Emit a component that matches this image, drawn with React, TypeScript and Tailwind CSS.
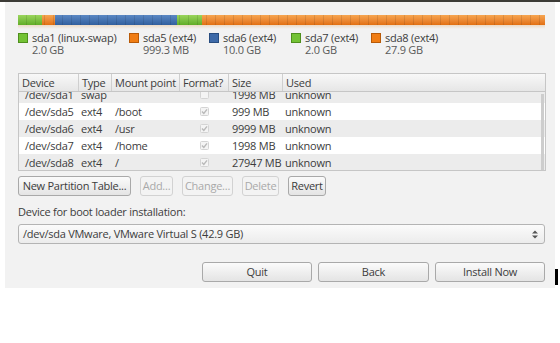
const font = { fontFamily: '"Open Sans", "Noto Sans", sans-serif' };

const segments = [
  { w: "w-[24px]", cls: "bg-linear-to-b from-[#9ad55c] to-[#62ad27]" },
  { w: "w-[13px]", cls: "bg-linear-to-b from-[#f6a550] to-[#e2700f]" },
  { w: "w-[122px]", cls: "bg-linear-to-b from-[#5b88c4] to-[#33609e]" },
  { w: "w-[25px]", cls: "bg-linear-to-b from-[#9ad55c] to-[#62ad27]" },
  { w: "flex-1", cls: "bg-linear-to-b from-[#f6a550] to-[#e2700f]" },
];

const legend = [
  { name: "sda1 (linux-swap)", size: "2.0 GB", w: "w-[111px]", sq: "bg-[#73c234] border-[#4f8f1d]" },
  { name: "sda5 (ext4)", size: "999.3 MB", w: "w-[80px]", sq: "bg-[#f07d14] border-[#b85a08]" },
  { name: "sda6 (ext4)", size: "10.0 GB", w: "w-[82px]", sq: "bg-[#3e6aa8] border-[#284d80]" },
  { name: "sda7 (ext4)", size: "2.0 GB", w: "w-[80px]", sq: "bg-[#73c234] border-[#4f8f1d]" },
  { name: "sda8 (ext4)", size: "27.9 GB", w: "w-[100px]", sq: "bg-[#f07d14] border-[#b85a08]" },
];

const rows = [
  { dev: "/dev/sda1", type: "swap", mount: "", fmt: false, size: "1998 MB" },
  { dev: "/dev/sda5", type: "ext4", mount: "/boot", fmt: true, size: "999 MB" },
  { dev: "/dev/sda6", type: "ext4", mount: "/usr", fmt: true, size: "9999 MB" },
  { dev: "/dev/sda7", type: "ext4", mount: "/home", fmt: true, size: "1998 MB" },
  { dev: "/dev/sda8", type: "ext4", mount: "/", fmt: true, size: "27947 MB" },
];

const cols = "grid grid-cols-[60px_33px_68px_49px_54px_1fr]";

const Check = ({ on }: { on: boolean }) => (
  <svg width="9" height="9" viewBox="0 0 9 9">
    <rect x="0.5" y="0.5" width="8" height="8" rx="1" fill="#f4f4f4" stroke="#d4d4d4" />
    {on && <path d="M2 4.6 L3.8 6.4 L7 2.4" fill="none" stroke="#b9b9b9" strokeWidth="1.4" />}
  </svg>
);

const Btn = ({ label, w, off }: { label: string; w: string; off?: boolean }) => (
  <div
    className={`${w} h-[20px] flex items-center justify-center whitespace-nowrap rounded-[3px] border text-[11px] ${
      off
        ? "border-[#d2d2d2] bg-[#f3f3f3] text-[#a9a9a9]"
        : "border-[#a9a9a9] bg-linear-to-b from-[#fbfbfb] to-[#e4e4e4] text-[#3c3c3c]"
    }`}
  >
    {label}
  </div>
);

export default function App() {
  return (
    <div className="relative w-[560px] h-[343px] bg-white text-[#3c3c3c] tracking-[-0.25px]" style={font}>
      <div className="h-[2px] bg-[#3c3b37]" />
      <div className="ml-[5px] w-[550px] h-[286px] bg-[#f2f2f2] pl-[13px] pt-[13px]">
        {/* partition bar */}
        <div className="w-[527px]">
          <div className="relative flex h-[10px] overflow-hidden">
            {segments.map((s, i) => (
              <div key={i} className={`${s.w} ${s.cls}`} />
            ))}
            <div className="absolute inset-0 bg-[repeating-linear-gradient(90deg,transparent_0,transparent_8px,rgba(0,0,0,0.1)_8px,rgba(0,0,0,0.1)_9px)]" />
          </div>
          <div className="h-[4px] bg-linear-to-b from-[#e9c9a6] to-[#f2f2f2] opacity-60" />
        </div>

        {/* legend */}
        <div className="flex mt-[3px] leading-[12px] text-[11px] whitespace-nowrap">
          {legend.map((l) => (
            <div key={l.name} className={`${l.w} flex`}>
              <div className={`w-[10px] h-[10px] border mt-[1px] ${l.sq}`} />
              <div className="ml-[4px]">
                <div>{l.name}</div>
                <div className="text-[#5a5a5a]">{l.size}</div>
              </div>
            </div>
          ))}
        </div>

        {/* table */}
        <div className="mt-[17px] w-[528px] border border-[#c6c6c6] bg-white text-[11px] whitespace-nowrap">
          <div className={`${cols} h-[18px] bg-linear-to-b from-[#f8f8f8] to-[#e6e6e6] border-b border-[#c6c6c6]`}>
            {["Device", "Type", "Mount point", "Format?", "Size", "Used"].map((h, i) => (
              <div key={h} className={`pl-[3px] leading-[17px] overflow-hidden ${i < 5 ? "border-r border-[#cfcfcf]" : ""}`}>
                {h}
              </div>
            ))}
          </div>
          <div className="relative h-[78px] overflow-hidden">
            <div className="-mt-[6px]">
              {rows.map((r, i) => (
                <div key={r.dev} className={`${cols} h-[17px] leading-[17px] ${i % 2 === 0 ? "bg-[#ececec]" : "bg-white"}`}>
                  <div className="pl-[6px]">{r.dev}</div>
                  <div className="pl-[2px]">{r.type}</div>
                  <div className="pl-[3px]">{r.mount}</div>
                  <div className="flex items-center justify-center">
                    <Check on={r.fmt} />
                  </div>
                  <div className="pl-[3px]">{r.size}</div>
                  <div className="pl-[2px]">unknown</div>
                </div>
              ))}
            </div>
            <div className="absolute right-[1px] top-[2px] bottom-0 w-[3px] bg-[#cdcdcd]" />
          </div>
        </div>

        {/* partition buttons */}
        <div className="flex mt-[5px] gap-[9px]">
          <Btn label="New Partition Table..." w="w-[113px]" />
          <Btn label="Add..." w="w-[33px]" off />
          <Btn label="Change..." w="w-[51px]" off />
          <Btn label="Delete" w="w-[37px]" off />
          <Btn label="Revert" w="w-[38px]" />
        </div>

        <div className="mt-[9px] text-[11px] leading-[14px]">Device for boot loader installation:</div>

        <div className="mt-[5px] w-[527px] h-[20px] flex items-center justify-between rounded-[3px] border border-[#b4b4b4] bg-linear-to-b from-[#fbfbfb] to-[#ececec] pl-[4px] pr-[6px] text-[11px]">
          <span>/dev/sda VMware, VMware Virtual S (42.9 GB)</span>
          <svg width="6" height="9" viewBox="0 0 6 9">
            <path d="M0 3.5 L3 0.5 L6 3.5 Z M0 5.5 L3 8.5 L6 5.5 Z" fill="#555" />
          </svg>
        </div>

        <div className="flex justify-end gap-[6px] w-[527px] mt-[18px]">
          <Btn label="Quit" w="w-[110px]" />
          <Btn label="Back" w="w-[111px]" />
          <Btn label="Install Now" w="w-[110px]" />
        </div>
      </div>
      <div className="absolute left-[555px] top-[269px] w-[3px] h-[16px] bg-black" />
    </div>
  );
}
